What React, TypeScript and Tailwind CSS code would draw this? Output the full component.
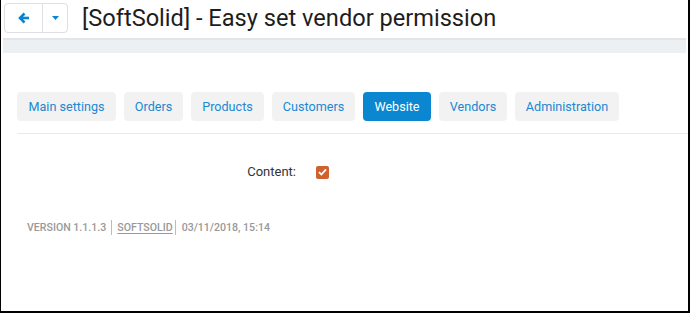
import React from "react";

const tabs: [string, string][] = [
  ["Main settings", "w-[99px]"],
  ["Orders", "w-[59px]"],
  ["Products", "w-[73px]"],
  ["Customers", "w-[83px]"],
  ["Website", "w-[68px]"],
  ["Vendors", "w-[68px]"],
  ["Administration", "w-[104px]"],
];

export default function App() {
  return (
    <div
      className="w-[690px] h-[313px] bg-white border-l border-r-2 border-b-2 border-black overflow-hidden flex flex-col"
      style={{ fontFamily: "Roboto, 'Liberation Sans', sans-serif" }}
    >
      <div className="h-[38px] flex items-start pl-[3px] pt-[3px]">
        <div className="flex h-[30px] border border-[#dcdfe3] rounded-[4px] bg-white">
          <button className="w-[38px] flex items-center justify-center border-r border-[#dcdfe3]">
            <svg width="12" height="12" viewBox="0 0 12 12">
              <path d="M6.5 1.5 L2 6 L6.5 10.5" stroke="#0b83cf" strokeWidth="2.6" fill="none" strokeLinejoin="miter" />
              <path d="M2.5 6 H11" stroke="#0b83cf" strokeWidth="2.6" />
            </svg>
          </button>
          <button className="w-[24px] flex items-center justify-center">
            <svg width="7" height="4" viewBox="0 0 7 4">
              <path d="M0 0 H7 L3.5 4 Z" fill="#0b83cf" />
            </svg>
          </button>
        </div>
        <h1 className="ml-[14px] text-[23.6px] leading-[30px] text-[#1d1d1d]">
          [SoftSolid] - Easy set vendor permission
        </h1>
      </div>
      <div className="h-[15px] ml-[2px] mr-[2px] bg-[#edf0f2] border-t-2 border-[#e3e6e9]" />
      <div className="flex gap-[8px] pl-[16px] mt-[39px]">
        {tabs.map(([t, w]) => (
          <div
            key={t}
            className={
              (t === "Website"
                ? "h-[29px] pt-[2px] flex items-center justify-center whitespace-nowrap rounded-[4px] bg-[#0a87d0] text-white text-[12.6px] "
                : "h-[29px] pt-[2px] flex items-center justify-center whitespace-nowrap rounded-[4px] bg-[#f2f2f2] text-[#1a88d2] text-[12.6px] ") + w
            }
          >
            {t}
          </div>
        ))}
      </div>
      <div className="ml-[16px] mt-[12px] border-t border-[#e4ecf2]" />
      <div className="flex items-center mt-[31px] h-[14px]">
        <div className="w-[295px] text-right text-[13px] text-[#333]">Content:</div>
        <div className="ml-[20px] w-[13px] h-[13px] rounded-[2px] bg-[#d0612f] flex items-center justify-center">
          <svg width="9" height="8" viewBox="0 0 9 8">
            <path d="M1 4.2 L3.4 6.5 L8 1.3" stroke="white" strokeWidth="1.8" fill="none" />
          </svg>
        </div>
      </div>
      <div className="flex items-center mt-[41px] pl-[26px] text-[10.6px] font-medium text-[#999] uppercase">
        <span>VERSION 1.1.1.3</span>
        <span className="mx-[5px] w-px h-[15px] bg-[#bbb]" />
        <span className="underline underline-offset-2">SOFTSOLID</span>
        <span className="ml-[2px] mr-[6px] w-px h-[15px] bg-[#bbb]" />
        <span>03/11/2018, 15:14</span>
      </div>
    </div>
  );
}
